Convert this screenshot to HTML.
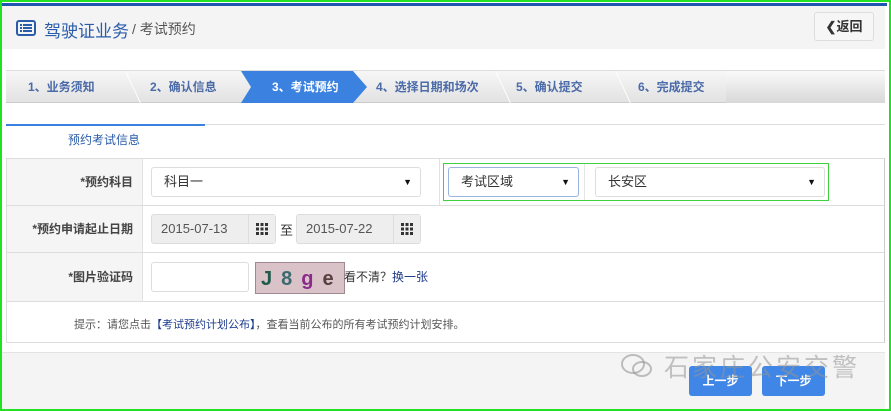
<!DOCTYPE html>
<html><head><meta charset="utf-8"><style>
*{box-sizing:border-box;margin:0;padding:0}
body{width:891px;height:411px;overflow:hidden;background:#fff;font-family:"Liberation Sans","Noto Sans CJK SC",sans-serif;font-size:12px;color:#333;position:relative}
.frame{position:absolute;left:0;top:0;width:891px;height:411px;border:2px solid #22e022;z-index:10;pointer-events:none}
.topline{position:absolute;left:2px;top:3px;width:885px;height:3px;background:#1e55b0}
.hdr{position:absolute;left:2px;top:6px;width:883px;height:43px;background:#f4f4f4}
.hdr .t1{position:absolute;left:42px;top:11px;font-size:17px;color:#2a5caa}
.hdr .t2{position:absolute;left:130px;top:13px;font-size:14px;color:#555}
.back{position:absolute;left:814px;top:12px;width:60px;height:29px;border:1px solid #ddd;border-radius:3px;background:#f6f6f6;font-size:13px;font-weight:bold;text-align:center;line-height:27px;color:#333}
.steps{position:absolute;left:6px;top:70px;width:879px;height:33px;background:linear-gradient(#f7f7f7,#e2e2e2);border-top:1px solid #ddd;border-bottom:1px solid #ccc}
.st{position:absolute;top:0;height:32px;line-height:32px;font-size:12px;font-weight:bold;color:#4a6aa8}
.act{position:absolute;left:235px;top:0;width:126px;height:32px;background:#3b82e0;clip-path:polygon(0 0,112px 0,126px 16px,112px 32px,0 32px,10px 16px)}
.tab{position:absolute;left:6px;top:124px;width:199px;height:2px;background:#3b82e0}
.tabline{position:absolute;left:205px;top:124px;width:680px;height:1px;background:#ddd}
.tabt{position:absolute;left:68px;top:131px;color:#2a5caa;font-size:12px}
.tbl{position:absolute;left:6px;top:158px;width:879px;height:185px;border:1px solid #ddd;border-right:1px solid #ccc}
.row{position:absolute;left:0;width:877px;border-bottom:1px solid #ddd}
.lab{position:absolute;left:0;top:0;bottom:0;width:136px;background:#f5f5f5;border-right:1px solid #e2e2e2;text-align:right;padding-right:9px;font-weight:bold;color:#444;font-size:12px}
.sel{position:absolute;height:30px;border:1px solid #ddd;border-radius:3px;background:#fff;font-size:13px;padding-left:12px;line-height:28px;color:#333}
.sel:after{content:"▼";position:absolute;right:8px;top:0;font-size:9px;color:#111}
.inp{position:absolute;height:30px;border:1px solid #ddd;border-radius:3px;background:#eee;font-size:13px;padding-left:9px;line-height:28px;color:#555}
.cal{position:absolute;right:0;top:0;width:27px;height:28px;border-left:1px solid #ddd;background:#eee}
.cal svg{position:absolute;left:7px;top:8px}
.foot{position:absolute;left:2px;top:352px;width:883px;height:57px;background:#f4f4f4;border-top:1px solid #e4e4e4}
.btn{position:absolute;top:366px;width:63px;height:30px;background:#3f86e6;border-radius:3px;color:#fff;font-weight:bold;font-size:12px;text-align:center;line-height:30px}
.wm{position:absolute;left:620px;top:352px;font-size:25px;line-height:28px;letter-spacing:3px;color:rgba(150,150,150,0.55);z-index:5;white-space:nowrap}
.sep{position:absolute;top:0;width:14px;height:32px;border-right:1px solid #fff;transform:skewX(25deg);transform-origin:top}
</style></head><body>
<div class="frame"></div>
<div class="topline"></div>
<div class="hdr">
 <svg style="position:absolute;left:14px;top:14px" width="20" height="16" viewBox="0 0 20 16"><rect x="1" y="1" width="18" height="14" rx="2" fill="none" stroke="#2a5caa" stroke-width="2"/><rect x="4" y="4" width="2" height="2" fill="#2a5caa"/><rect x="7" y="4" width="9" height="2" fill="#2a5caa"/><rect x="4" y="7" width="2" height="2" fill="#2a5caa"/><rect x="7" y="7" width="9" height="2" fill="#2a5caa"/><rect x="4" y="10" width="2" height="2" fill="#2a5caa"/><rect x="7" y="10" width="9" height="2" fill="#2a5caa"/></svg>
 <div class="t1">驾驶证业务</div><div class="t2">/ 考试预约</div>
</div>
<div class="back">&#10094;返回</div>
<div class="steps">
 <div class="sep" style="left:106px"></div>
 <div class="sep" style="left:476px"></div>
 <div class="sep" style="left:596px"></div>
 <div class="act"></div>
 <div class="st" style="left:22px">1、业务须知</div>
 <div class="st" style="left:144px">2、确认信息</div>
 <div class="st" style="left:266px;color:#fff">3、考试预约</div>
 <div class="st" style="left:370px">4、选择日期和场次</div>
 <div class="st" style="left:510px">5、确认提交</div>
 <div class="st" style="left:632px">6、完成提交</div>
 <div style="position:absolute;left:720px;top:0;width:159px;height:32px;background:linear-gradient(#fafafa,#d8d8d8)"></div>
</div>
<div class="tab"></div><div class="tabline"></div>
<div class="tabt">预约考试信息</div>
<div class="tbl">
 <div class="row" style="top:0;height:47px">
  <div class="lab" style="line-height:46px">*预约科目</div>
  <div class="sel" style="left:144px;top:8px;width:270px">科目一</div>
  <div style="position:absolute;left:432px;top:0;bottom:0;width:1px;background:#e2e2e2"></div>
  <div style="position:absolute;left:436px;top:4px;width:386px;height:38px;border:1px solid #3ed03e"></div>
  <div style="position:absolute;left:577px;top:5px;bottom:5px;width:1px;background:#e6e6e6"></div>
  <div class="sel" style="left:441px;top:8px;width:131px;border-color:#9ab4e0">考试区域</div>
  <div class="sel" style="left:588px;top:8px;width:230px">长安区</div>
 </div>
 <div class="row" style="top:47px;height:47px">
  <div class="lab" style="line-height:46px">*预约申请起止日期</div>
  <div class="inp" style="left:144px;top:8px;width:125px">2015-07-13<div class="cal"><svg width="12" height="12"><g fill="#333"><rect x="0" y="0" width="3" height="3"/><rect x="4.5" y="0" width="3" height="3"/><rect x="9" y="0" width="3" height="3"/><rect x="0" y="4.5" width="3" height="3"/><rect x="4.5" y="4.5" width="3" height="3"/><rect x="9" y="4.5" width="3" height="3"/><rect x="0" y="9" width="3" height="3"/><rect x="4.5" y="9" width="3" height="3"/><rect x="9" y="9" width="3" height="3"/></g></svg></div></div>
  <div style="position:absolute;left:273px;top:14px;font-size:13px">至</div>
  <div class="inp" style="left:289px;top:8px;width:125px">2015-07-22<div class="cal"><svg width="12" height="12"><g fill="#333"><rect x="0" y="0" width="3" height="3"/><rect x="4.5" y="0" width="3" height="3"/><rect x="9" y="0" width="3" height="3"/><rect x="0" y="4.5" width="3" height="3"/><rect x="4.5" y="4.5" width="3" height="3"/><rect x="9" y="4.5" width="3" height="3"/><rect x="0" y="9" width="3" height="3"/><rect x="4.5" y="9" width="3" height="3"/><rect x="9" y="9" width="3" height="3"/></g></svg></div></div>
 </div>
 <div class="row" style="top:94px;height:49px">
  <div class="lab" style="line-height:48px">*图片验证码</div>
  <div class="inp" style="left:144px;top:9px;width:98px;background:#fff"></div>
  <div style="position:absolute;left:248px;top:9px;width:90px;height:32px;background:#d9c3c8;border:1px solid #a08890;font-weight:bold;font-size:20px;letter-spacing:9px;padding-left:5px;line-height:32px"><span style="color:#1f5a4a">J</span><span style="color:#3a6a70">8</span><span style="color:#8a2a8a">g</span><span style="color:#5a4040">e</span></div>
  <div style="position:absolute;left:337px;top:15px;font-size:12px">看不清？<span style="color:#1e3c8c">换一张</span></div>
 </div>
 <div class="row" style="top:143px;height:41px;border-bottom:none">
  <div style="position:absolute;left:67px;top:14px;font-size:11px;color:#555">提示：请您点击<b style="color:#1e3c8c;font-weight:normal">【考试预约计划公布】</b>，查看当前公布的所有考试预约计划安排。</div>
 </div>
</div>
<div class="foot"></div>
<div class="btn" style="left:689px">上一步</div>
<div class="btn" style="left:762px">下一步</div>
<div class="wm"><svg width="34" height="28" viewBox="0 0 34 28" style="vertical-align:-4px"><ellipse cx="13" cy="12" rx="11" ry="9" fill="none" stroke="rgba(150,150,150,0.6)" stroke-width="2"/><ellipse cx="22" cy="17" rx="9" ry="7" fill="none" stroke="rgba(150,150,150,0.6)" stroke-width="2"/></svg> 石家庄公安交警</div>
</body></html>
